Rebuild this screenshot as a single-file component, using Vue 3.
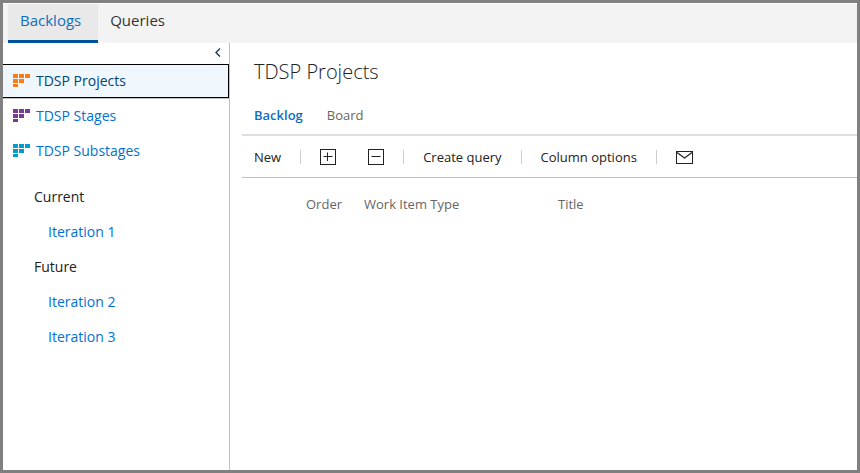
<script setup>
import { ref } from 'vue'

const hubs = ['Backlogs', 'Queries']
const activeHub = ref('Backlogs')

const backlogs = [
  { name: 'TDSP Projects', tone: 'orange' },
  { name: 'TDSP Stages', tone: 'purple' },
  { name: 'TDSP Substages', tone: 'cyan' },
]
const selected = ref('TDSP Projects')

const iterationGroups = [
  { label: 'Current', items: ['Iteration 1'] },
  { label: 'Future', items: ['Iteration 2', 'Iteration 3'] },
]

const views = ['Backlog', 'Board']
const activeView = ref('Backlog')
</script>

<template>
  <div class="window">
    <header class="hubs">
      <nav class="hub-list" aria-label="Hubs">
        <a
          v-for="hub in hubs"
          :key="hub"
          href="#"
          class="hub"
          :class="{ active: hub === activeHub }"
          @click.prevent="activeHub = hub"
        >{{ hub }}</a>
      </nav>
    </header>

    <div class="body">
      <aside class="sidebar">
        <div class="collapse-row">
          <button type="button" class="collapse" aria-label="Collapse pane">
            <svg width="6" height="9" viewBox="0 0 6 9" fill="none" stroke="#1b3a57" stroke-width="1.4">
              <path d="M5 0.5 L1 4.5 L5 8.5" />
            </svg>
          </button>
        </div>

        <nav class="backlogs" aria-label="Backlogs">
          <a
            v-for="item in backlogs"
            :key="item.name"
            href="#"
            class="backlog"
            :class="{ selected: item.name === selected }"
            @click.prevent="selected = item.name"
          >
            <svg class="glyph" :class="item.tone" width="18" height="14" viewBox="0 0 18 14" fill="currentColor">
              <rect x="0" y="0" width="5" height="4" />
              <rect x="6" y="0" width="5" height="4" />
              <rect x="12" y="0" width="5" height="4" />
              <rect x="0" y="5" width="5" height="4" />
              <rect x="6" y="5" width="5" height="4" />
              <rect x="0" y="10" width="5" height="3" />
            </svg>
            <span>{{ item.name }}</span>
          </a>
        </nav>

        <nav class="iterations" aria-label="Iterations">
          <section v-for="group in iterationGroups" :key="group.label">
            <div class="group-label">{{ group.label }}</div>
            <a v-for="name in group.items" :key="name" href="#" class="iteration">{{ name }}</a>
          </section>
        </nav>
      </aside>

      <main class="main">
        <h1 class="title">{{ selected }}</h1>

        <nav class="views" aria-label="Views">
          <a
            v-for="view in views"
            :key="view"
            href="#"
            class="view"
            :class="{ active: view === activeView }"
            @click.prevent="activeView = view"
          >{{ view }}</a>
        </nav>

        <div class="toolbar" role="toolbar">
          <button type="button" class="tool">New</button>
          <span class="sep"></span>
          <span class="pair">
            <button type="button" class="tool" aria-label="Expand one level">
              <svg width="16" height="16" viewBox="0 0 16 16" fill="none" stroke="#222">
                <rect x="0.5" y="0.5" width="15" height="15" />
                <path d="M3.5 7.5 H12.5 M7.5 3.5 V12" />
              </svg>
            </button>
            <button type="button" class="tool" aria-label="Collapse one level">
              <svg width="16" height="16" viewBox="0 0 16 16" fill="none" stroke="#222">
                <rect x="0.5" y="0.5" width="15" height="15" />
                <path d="M3.5 7.5 H12.5" />
              </svg>
            </button>
          </span>
          <span class="sep"></span>
          <button type="button" class="tool">Create query</button>
          <span class="sep"></span>
          <button type="button" class="tool">Column options</button>
          <span class="sep"></span>
          <button type="button" class="tool" aria-label="Email">
            <svg width="18" height="13" viewBox="0 0 18 13" fill="none" stroke="#222">
              <rect x="0.5" y="0.5" width="16" height="12" />
              <path d="M1 1.5 L8.5 7 L16 1.5" stroke-width="1.2" />
            </svg>
          </button>
        </div>

        <table class="grid">
          <thead>
            <tr>
              <th scope="col" class="col-order">Order</th>
              <th scope="col" class="col-type">Work Item Type</th>
              <th scope="col">Title</th>
            </tr>
          </thead>
        </table>
      </main>
    </div>
  </div>
</template>

<style>
body {
  margin: 0;
}
</style>

<style scoped>
.window {
  box-sizing: border-box;
  min-height: 100vh;
  display: flex;
  flex-direction: column;
  border: 3px solid #808080;
  padding-top: 1px;
  background: #fff;
  color: #222;
  font-family: "Open Sans", "Noto Sans", sans-serif;
  font-size: 14px;
  line-height: 20px;
}

a {
  text-decoration: none;
}

button {
  margin: 0;
  padding: 0;
  border: 0;
  background: none;
  color: inherit;
  font: inherit;
}

svg {
  display: block;
}

.hubs {
  background: #f3f3f3;
  padding-left: 5px;
}

.hub-list {
  display: flex;
}

.hub {
  padding: 6px 17px 10px 12px;
  border-bottom: 3px solid transparent;
  color: #333;
  font-size: 15px;
}

.hub.active {
  background: #e9e9e9;
  border-bottom-color: #00529c;
  color: #106ebe;
}

.body {
  flex: 1;
  display: flex;
}

.sidebar {
  box-sizing: border-box;
  flex: 0 0 227px;
  border-right: 1px solid #c0c0c0;
}

.collapse-row {
  display: flex;
  justify-content: flex-end;
  padding: 5px 8px 7px 0;
}

.backlogs {
  display: grid;
  gap: 1px;
}

.backlog {
  display: flex;
  align-items: center;
  gap: 5px;
  padding: 6px 0 6px 10px;
  border: 1px solid transparent;
  border-left: 0;
  color: #0072d6;
}

.backlog.selected {
  background: #eff6fc;
  border-color: #000;
  box-shadow: 0 1px #c0c0c0;
  color: #004578;
}

.glyph.orange {
  color: #ff7b0e;
}

.glyph.purple {
  color: #773b93;
}

.glyph.cyan {
  color: #009ccc;
}

.iterations {
  padding-top: 12px;
}

.group-label {
  padding: 7px 0 8px 31px;
}

.iteration {
  display: block;
  padding: 7px 0 8px 45px;
  color: #0072d6;
}

.main {
  flex: 1;
  min-width: 0;
  padding: 16px 0 0 12px;
}

.title {
  margin: 0;
  padding-left: 12px;
  font-size: 20px;
  font-weight: 300;
  line-height: 26px;
}

.views {
  display: flex;
  gap: 24px;
  padding: 20px 12px 9px;
  border-bottom: 2px solid #dfdfdf;
}

.view {
  color: #666;
  font-size: 13px;
}

.view.active {
  color: #106ebe;
  font-weight: 600;
}

.toolbar {
  display: flex;
  align-items: center;
  gap: 19px;
  padding: 11px 12px 10px;
  border-bottom: 1px solid #c0c0c0;
  font-size: 13px;
}

.pair {
  display: flex;
  gap: 32px;
}

.sep {
  width: 1px;
  height: 14px;
  background: #ccc;
}

.grid {
  width: 100%;
  margin-top: 16px;
  border-collapse: collapse;
  table-layout: fixed;
  font-size: 13px;
}

.grid th {
  padding: 0;
  color: #666;
  font-weight: 400;
  text-align: left;
}

.grid .col-order {
  box-sizing: border-box;
  width: 122px;
  padding-left: 64px;
}

.grid .col-type {
  width: 194px;
}
</style>
